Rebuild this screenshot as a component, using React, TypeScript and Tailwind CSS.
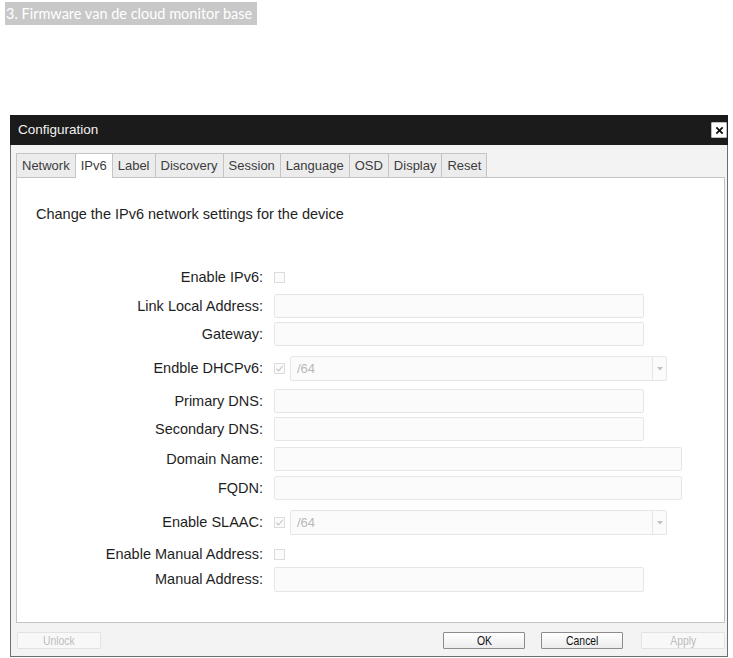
const tabs = ['Network', 'IPv6', 'Label', 'Discovery', 'Session', 'Language', 'OSD', 'Display', 'Reset']

function Checkbox({ checked }: { checked?: boolean }) {
  return (
    <div className="w-[11px] h-[11px] border border-[#dcdcdc] bg-[#fbfbfb] flex items-center justify-center">
      {checked && (
        <svg className="w-[9px] h-[9px]" viewBox="0 0 10 10" fill="none" stroke="#c4c4c4" strokeWidth={1.2}>
          <path d="M1.5 5.2 L4 7.6 L8.6 2.2" />
        </svg>
      )}
    </div>
  )
}

function TextInput({ wide }: { wide?: boolean }) {
  return (
    <div
      className={`h-full rounded-[2px] border border-[#e6e6e6] bg-[#fbfbfb] ${
        wide ? 'w-[408px]' : 'w-[370px]'
      }`}
    />
  )
}

function SelectBox() {
  return (
    <div className="flex items-center gap-[5px] h-full">
      <Checkbox checked />
      <div className="flex h-full w-[377px] rounded-[2px] border border-[#e6e6e6] bg-[#fbfbfb]">
        <div className="flex-1 flex items-center pl-[6px] text-[13px] text-[#b8b8b8]">/64</div>
        <div className="w-[14px] border-l border-[#e6e6e6] flex items-center justify-center">
          <svg className="w-[6px] h-[4px]" viewBox="0 0 6 4" fill="#c0c0c0">
            <path d="M0 0 L6 0 L3 3.5 Z" />
          </svg>
        </div>
      </div>
    </div>
  )
}

function Row({ label, spacing, height, children }: { label: string; spacing: string; height: string; children: React.ReactNode }) {
  return (
    <div className={`flex items-center ${spacing} ${height}`}>
      <div className="w-[246px] text-right text-[14.5px] text-[#1e1e1e] leading-none">{label}</div>
      <div className="ml-[11px] h-full flex items-center">{children}</div>
    </div>
  )
}

function DialogButton({ label, disabled, width, spacing }: { label: string; disabled?: boolean; width: string; spacing: string }) {
  return (
    <button
      className={`${width} ${spacing} h-[17px] rounded-[1px] flex items-center justify-center text-[13px] ${
        disabled
          ? 'border border-[#e2e2e2] bg-[#f8f8f8] text-[#bdbdbd]'
          : 'border border-[#8c8c8c] bg-gradient-to-b from-white to-[#ececec] text-[#111]'
      }`}
    >
      <span className="inline-block scale-x-[0.8]">{label}</span>
    </button>
  )
}

export default function App() {
  return (
    <div className="w-[733px] h-[658px] bg-white overflow-hidden" style={{ fontFamily: '"Liberation Sans", Arial, sans-serif' }}>
      {/* Caption */}
      <div className="mt-[2px] ml-[5px] w-[252px] h-[23px] bg-[#c8c8c8] flex items-center px-[1px]">
        <span className="text-white text-[14.5px] whitespace-nowrap" style={{ fontFamily: 'Lato, "Open Sans", sans-serif' }}>
          3. Firmware van de cloud monitor base
        </span>
      </div>

      {/* Dialog */}
      <div className="mt-[90px] ml-[10px] w-[718px] h-[542px] flex flex-col border-x border-b border-[#6e6e6e] bg-[#f3f3f3]">
        {/* Title bar */}
        <div className="h-[30px] bg-[#1b1b1b] flex items-center justify-between pl-[8px] pr-[1px] -mx-px">
          <span className="text-[13.5px] text-[#f2f2f2]">Configuration</span>
          <div className="w-[16px] h-[16px] bg-white border border-[#bdbdbd] rounded-[1px] flex items-center justify-center">
            <svg className="w-[9px] h-[9px]" viewBox="0 0 10 10" stroke="#111" strokeWidth={2}>
              <path d="M1.5 1.5 L8.5 8.5 M8.5 1.5 L1.5 8.5" />
            </svg>
          </div>
        </div>

        {/* Body */}
        <div className="flex-1 flex flex-col pt-[8px] pl-[5px] pr-[2px]">
          {/* Tabs */}
          <div className="flex h-[24px]">
            {tabs.map((t) => (
              <div
                key={t}
                className={`px-[5px] flex items-center text-[13px] text-[#3c3c3c] border-t border-l border-[#c4c4c4] last:border-r ${
                  t === 'IPv6' ? 'bg-white h-[25px] relative z-10' : 'bg-[#ececec] h-[24px]'
                }`}
              >
                {t}
              </div>
            ))}
          </div>

          {/* Panel */}
          <div className="h-[446px] bg-white border border-[#c4c4c4] flex flex-col">
            <div className="mt-[28px] ml-[19px] text-[14.5px] text-[#1e1e1e] leading-[16px]">
              Change the IPv6 network settings for the device
            </div>

            <Row label="Enable IPv6:" spacing="mt-[47px]" height="h-[16px]">
              <Checkbox />
            </Row>
            <Row label="Link Local Address:" spacing="mt-[9px]" height="h-[24px]">
              <TextInput />
            </Row>
            <Row label="Gateway:" spacing="mt-[4px]" height="h-[24px]">
              <TextInput />
            </Row>
            <Row label="Endble DHCPv6:" spacing="mt-[10px]" height="h-[25px]">
              <SelectBox />
            </Row>
            <Row label="Primary DNS:" spacing="mt-[8px]" height="h-[24px]">
              <TextInput />
            </Row>
            <Row label="Secondary DNS:" spacing="mt-[4px]" height="h-[24px]">
              <TextInput />
            </Row>
            <Row label="Domain Name:" spacing="mt-[6px]" height="h-[24px]">
              <TextInput wide />
            </Row>
            <Row label="FQDN:" spacing="mt-[5px]" height="h-[24px]">
              <TextInput wide />
            </Row>
            <Row label="Enable SLAAC:" spacing="mt-[10px]" height="h-[25px]">
              <SelectBox />
            </Row>
            <Row label="Enable Manual Address:" spacing="mt-[11px]" height="h-[16px]">
              <Checkbox />
            </Row>
            <Row label="Manual Address:" spacing="mt-[5px]" height="h-[25px]">
              <TextInput />
            </Row>
          </div>

          {/* Buttons */}
          <div className="mt-[9px] flex items-center h-[17px]">
            <DialogButton label="Unlock" disabled width="w-[84px]" spacing="ml-px" />
            <div className="flex-1" />
            <DialogButton label="OK" width="w-[82px]" spacing="" />
            <DialogButton label="Cancel" width="w-[82px]" spacing="ml-[16px]" />
            <DialogButton label="Apply" disabled width="w-[84px]" spacing="ml-[18px]" />
          </div>
        </div>
      </div>
    </div>
  )
}
